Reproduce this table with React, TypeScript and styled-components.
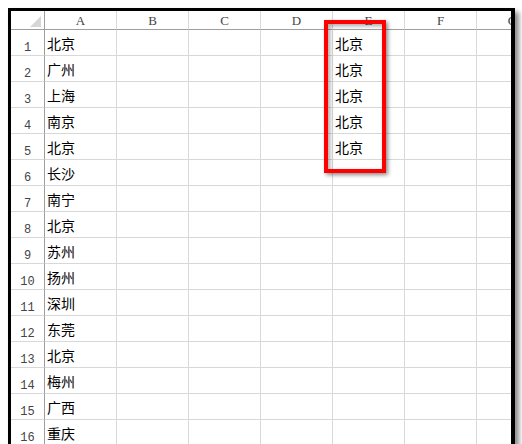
import React from "react";
import styled, { createGlobalStyle } from "styled-components";

const Global = createGlobalStyle`
  html, body { margin: 0; padding: 0; background: #ffffff; overflow: hidden; }
  body { padding: 8px 0 0 8px; height: 444px; box-sizing: border-box; }
`;

const Frame = styled.div`
  position: relative;
  width: 507px;
  height: 437px;
  box-sizing: border-box;
  border-top: 3px solid #000;
  border-left: 3px solid #000;
  border-right: 4px solid #000;
  box-shadow: 4px 4px 5px rgba(0, 0, 0, 0.45);
  background: #fff;
  overflow: hidden;
`;

const Grid = styled.div`
  display: grid;
  grid-template-columns: 34px repeat(7, 72px);
  grid-auto-rows: 26px;
  grid-template-rows: 19px;
`;

const Corner = styled.div`
  position: relative;
  border-right: 1px solid #9e9e9e;
  border-bottom: 1px solid #9e9e9e;
  &::after {
    content: "";
    position: absolute;
    right: 3px;
    bottom: 2px;
    width: 0;
    height: 0;
    border-left: 11px solid transparent;
    border-bottom: 11px solid #d6d6d6;
  }
`;

const ColHead = styled.div`
  border-right: 1px solid #d8d8d8;
  border-bottom: 1px solid #9e9e9e;
  display: flex;
  align-items: flex-end;
  justify-content: center;
  padding-bottom: 2px;
  box-sizing: border-box;
  font-family: "Liberation Serif", "DejaVu Serif", serif;
  font-size: 13px;
  line-height: 13px;
  color: #444;
`;

const RowHead = styled.div`
  border-right: 1px solid #9e9e9e;
  border-bottom: 1px solid #d8d8d8;
  display: flex;
  align-items: flex-end;
  justify-content: center;
  padding-bottom: 1px;
  box-sizing: border-box;
  font-family: "Liberation Mono", "DejaVu Sans Mono", monospace;
  font-size: 12px;
  line-height: 12px;
  color: #444;
`;

const Cell = styled.div`
  border-right: 1px solid #d8d8d8;
  border-bottom: 1px solid #d8d8d8;
  display: flex;
  align-items: flex-end;
  padding: 0 0 4px 2px;
  box-sizing: border-box;
  font-family: "Noto Sans CJK SC", sans-serif;
  font-size: 14px;
  line-height: 16px;
  color: #000;
  white-space: nowrap;
  overflow: hidden;
`;

const Highlight = styled.div`
  position: absolute;
  left: 313px;
  top: 9px;
  width: 62px;
  height: 153px;
  box-sizing: border-box;
  border: 4px solid #ff0000;
  box-shadow: 2px 2px 4px rgba(0, 0, 0, 0.45), inset 2px 2px 4px rgba(0, 0, 0, 0.35);
  pointer-events: none;
`;

const cols = ["A", "B", "C", "D", "E", "F", "G"];
const colA = ["北京", "广州", "上海", "南京", "北京", "长沙", "南宁", "北京", "苏州", "扬州", "深圳", "东莞", "北京", "梅州", "广西", "重庆"];
const colE = ["北京", "北京", "北京", "北京", "北京"];

export default function App() {
  return (
    <>
      <Global />
      <Frame>
        <Grid>
          <Corner />
          {cols.map((c) => (
            <ColHead key={c}>{c}</ColHead>
          ))}
          {colA.map((a, i) => (
            <React.Fragment key={i}>
              <RowHead>{i + 1}</RowHead>
              <Cell>{a}</Cell>
              <Cell />
              <Cell />
              <Cell />
              <Cell>{colE[i] ?? ""}</Cell>
              <Cell />
              <Cell />
            </React.Fragment>
          ))}
        </Grid>
        <Highlight />
      </Frame>
    </>
  );
}
